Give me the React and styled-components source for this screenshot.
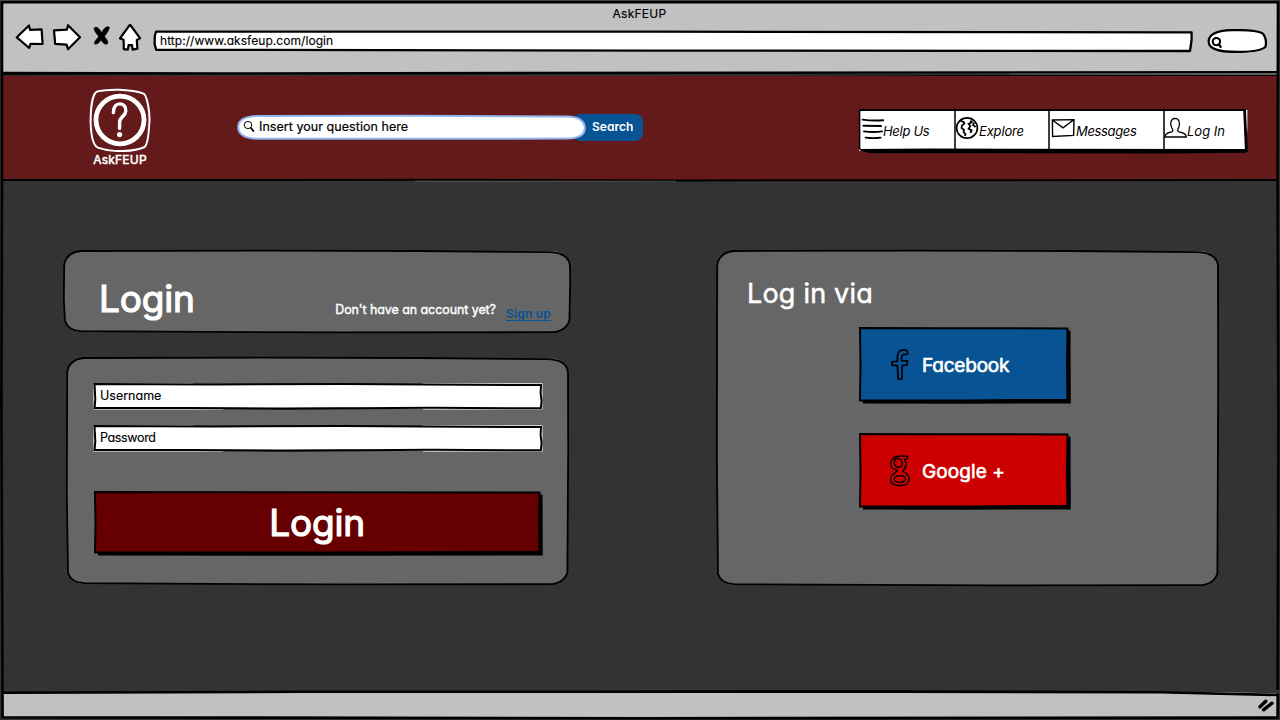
import React from "react";
import styled, { createGlobalStyle } from "styled-components";

const GlobalStyle = createGlobalStyle`
  * { box-sizing: border-box; }
  body {
    margin: 0;
    background: #333;
    overflow: hidden;
    font-family: Inter, "Open Sans", sans-serif;
    font-feature-settings: "cv11" 1;
  }
`;

/* ---------- window ---------- */

const Window = styled.div`
  position: relative;
  width: 1280px;
  height: 720px;
  display: flex;
  flex-direction: column;
  background: #333;
`;

const Chrome = styled.header`
  flex: none;
  height: 76px;
  margin: 0 2px;
  background: #c1c1c1;
  color: #000;
`;

const WindowTitle = styled.div`
  height: 24px;
  padding-top: 3px;
  padding-right: 1px;
  line-height: 21px;
  font-size: 12px;
  letter-spacing: 0.25px;
  text-align: center;
  -webkit-text-stroke: 0.15px #000;
`;

const Toolbar = styled.div`
  display: flex;
  height: 34px;
  padding-left: 12px;
`;

const ToolIcons = styled.svg`
  flex: none;
  width: 130px;
  height: 34px;
`;

const AddressBar = styled.div`
  position: relative;
  width: 1041px;
  height: 22px;
  margin: 6px 0 0 8px;
  padding-left: 8px;
  line-height: 22px;
  font-size: 12px;
  letter-spacing: 0.05px;
  -webkit-text-stroke: 0.15px #000;
`;

const ChromeSearch = styled.svg`
  flex: none;
  width: 62px;
  height: 28px;
  margin: 3px 0 0 13px;
`;

const Overlay = styled.svg`
  position: absolute;
  inset: 0;
  width: 100%;
  height: 100%;
  overflow: visible;
  pointer-events: none;
`;

const Label = styled.span`
  position: relative;
`;

const StatusBar = styled.footer`
  flex: none;
  display: flex;
  justify-content: flex-end;
  height: 26px;
  margin: 0 2px 2px;
  background: #c1c1c1;
`;

const Grip = styled.svg`
  width: 20px;
  height: 16px;
  margin-top: 7px;
`;

/* ---------- site header ---------- */

const SiteHeader = styled.div`
  flex: none;
  display: flex;
  height: 105px;
  margin: 0 2px;
  padding: 12px 31px 0 87px;
  background: #641a1a;
`;

const Brand = styled.div`
  width: 62px;
  color: #fff;
  text-align: center;
`;

const BrandMark = styled.svg`
  display: block;
  width: 62px;
  height: 64px;
`;

const BrandName = styled.div`
  height: 14px;
  line-height: 15px;
  font-size: 12px;
  letter-spacing: 0.2px;
  -webkit-text-stroke: 0.5px #fff;
`;

const Search = styled.form`
  display: flex;
  margin: 26px 0 0 86px;
`;

const SearchField = styled.div`
  position: relative;
  z-index: 1;
  display: flex;
  width: 349px;
  height: 26px;
  padding: 0 0 1px 5px;
  align-items: center;
  color: #000;
  font-size: 12.5px;
  letter-spacing: 0.05px;
  -webkit-text-stroke: 0.2px #000;
`;

const SearchGlyph = styled.svg`
  position: relative;
  width: 15px;
  height: 15px;
  margin-right: 2px;
`;

const SearchButton = styled.button`
  width: 70px;
  height: 27px;
  margin: 0 0 0 -13px;
  padding: 0 10px 2px 19px;
  border: 0;
  border-radius: 8px;
  background: #075394;
  color: #fff;
  font: 600 12px Inter, sans-serif;
  font-feature-settings: inherit;
  text-align: left;
`;

const Nav = styled.nav`
  position: relative;
  display: flex;
  width: 389px;
  height: 45px;
  margin: 21px 0 0 auto;
  padding: 1px 3px 3px 1px;
`;

const NavItem = styled.a`
  position: relative;
  display: flex;
  align-items: center;
  width: ${(p) => p.$width}px;
  padding-left: ${(p) => p.$pad}px;
  color: #000;
  font-size: 13px;
  font-style: italic;
  letter-spacing: ${(p) => p.$track}px;
  white-space: nowrap;
`;

const NavIcon = styled.svg`
  flex: none;
  width: 24px;
  height: 24px;
  margin: -5px ${(p) => p.$gap}px 0 0;
`;

/* ---------- content ---------- */

const Content = styled.main`
  flex: none;
  display: flex;
  gap: 145px;
  height: 511px;
  padding: 69px 0 0 63px;
  color: #fff;
`;

const LeftColumn = styled.div`
  width: 508px;
`;

const Panel = styled.section`
  position: relative;
  width: ${(p) => p.$w}px;
  height: ${(p) => p.$h}px;
`;

const HeadingPanel = styled(Panel)`
  display: flex;
  padding: 27px 20px 0 36px;
`;

const BigText = styled.span`
  position: relative;
  font-size: 37px;
  letter-spacing: -0.2px;
  line-height: 44px;
  -webkit-text-stroke: 1.2px #fff;
`;

const Prompt = styled.span`
  position: relative;
  margin: 23px 10px 0 auto;
  font-size: 12.5px;
  letter-spacing: -0.08px;
  line-height: 20px;
  -webkit-text-stroke: 0.4px #fff;
`;

const SignUp = styled.a`
  position: relative;
  height: 17px;
  margin-top: 27px;
  border-bottom: 1px solid #075394;
  color: #075394;
  font-size: 12px;
  font-weight: 600;
  letter-spacing: 0.2px;
  line-height: 19px;
`;

const FormPanel = styled(Panel)`
  display: flex;
  flex-direction: column;
  margin: 24px 0 0 3px;
  padding: 26px 0 0 27px;
`;

const Field = styled.div`
  position: relative;
  flex: none;
  width: 450px;
  height: 27px;
  margin-bottom: 15px;
  padding-left: 7px;
  color: #000;
  font-size: 12.5px;
  letter-spacing: ${(p) => p.$track || 0}px;
  line-height: 26px;
  -webkit-text-stroke: 0.15px #000;
`;

const BoxButton = styled.button`
  position: relative;
  display: flex;
  align-items: center;
  width: ${(p) => p.$w}px;
  height: ${(p) => p.$h}px;
  padding: 0;
  border: 0;
  background: none;
  color: #fff;
  font: 400 19px Inter, sans-serif;
  font-feature-settings: inherit;
`;

const SubmitButton = styled(BoxButton)`
  justify-content: center;
  margin: 24px 0 0 1px;
  padding: 0 3px 2px 0;
`;

const ViaPanel = styled(Panel)`
  padding: 28px 0 0 31px;
`;

const ViaTitle = styled.h2`
  position: relative;
  margin: 0 0 17px;
  font-size: 27px;
  font-weight: 400;
  letter-spacing: 0.2px;
  line-height: 32px;
  -webkit-text-stroke: 0.5px #fff;
`;

const ProviderButton = styled(BoxButton)`
  margin: 0 0 29px 112px;
  padding: 0 0 1px 28px;
`;

const ProviderIcon = styled.svg`
  position: relative;
  width: 26px;
  height: 34px;
  margin-right: ${(p) => p.$gap}px;
`;

const ProviderName = styled.span`
  position: relative;
  letter-spacing: ${(p) => p.$track}px;
  -webkit-text-stroke: 0.65px #fff;
`;

/* ---------- hand-drawn outlines ---------- */

function PanelOutline({ w, h }) {
  const d = `M1.2 16 C1.5 8 8 1.6 18 1 L${w * 0.4} .7 L${w * 0.7} 1 L${w - 22} 2.2
    C${w - 9} 2.6 ${w - 1.5} 7 ${w - 1} 16 L${w - 0.8} ${h * 0.4} L${w - 1.6} ${h - 13}
    C${w - 3} ${h - 6} ${w - 10} ${h - 1} ${w - 20} ${h - 0.8} L${w * 0.55} ${h - 0.6}
    L${w * 0.2} ${h - 1.3} L18 ${h - 1.8} C10 ${h - 2.2} 4 ${h - 6} 2 ${h - 12}
    L.8 ${h * 0.6} Z`;
  return (
    <Overlay viewBox={`0 0 ${w} ${h}`}>
      <rect x="1" y="1" width={w - 2} height={h - 2} rx="17" fill="#666" />
      <path d={d} fill="#666" stroke="#000" strokeWidth="1.8" />
    </Overlay>
  );
}

function FieldOutline() {
  return (
    <Overlay viewBox="0 0 450 27">
      <rect x=".5" y=".3" width="449" height="26.2" fill="#fff" />
      <path d="M100 0H330V1H100ZM130 26H330V27H130Z" fill="#666" />
      <path d="M1.5 1 L120 1.4 L250 .9 L330 1.6 L448 2 L447.6 10 L448.6 18 L447.8 25.3 L340 24.8 L190 25.7 L100 25 L1.6 25 L2.3 16 Z" fill="#fff" stroke="#000" strokeWidth="2" />
      <path d="M110 24.8L190 26L280 24.6Z" fill="#000" />
    </Overlay>
  );
}

function ButtonOutline({ w, h, fill }) {
  return (
    <Overlay viewBox={`0 0 ${w} ${h}`}>
      <path d={`M4 3.4 H${w - 0.5} L${w - 0.2} ${h - 0.6} L${w / 2} ${h - 0.2} L4 ${h - 0.6} Z`} fill="#000" />
      <path
        d={`M1 1 L${w * 0.4} 1.3 L${w - 3.5} 1.4 L${w - 4} ${h * 0.5} L${w - 3.6} ${h - 4.2} L${w * 0.5} ${h - 3.6} L1 ${h - 3.4} L1.5 ${h * 0.5} Z`}
        fill={fill} stroke="#000" strokeWidth="2"
      />
    </Overlay>
  );
}

function WindowOutline() {
  return (
    <Overlay viewBox="0 0 1280 720">
      <path d="M0 0H1280V1H0Z" fill="#444" />
      <path d="M1278.7 0V720" stroke="#333" strokeWidth="1.5" />
      <g fill="none" stroke="#000" strokeWidth="2.6" strokeLinejoin="round">
        <path d="M2 2.2 L1278 2.2 L1277.6 180 L1278.4 420 L1277.6 717.6 L640 718.2 L2.6 717.2 L1.4 400 L2 180 Z" />
        <path d="M2 72.9 L220 73.4 L1278 72.2" strokeWidth="2.4" />
        <path d="M2 74.9 L640 75 L1278 75.2" strokeWidth="1.6" />
        <path d="M2 180.1 L420 179.8 L680 180.4 L1278 180.1" strokeWidth="2" />
        <path d="M2 692.8 L300 691.8 L900 691.6 L1160 692.3 L1278 695" strokeWidth="2.6" />
      </g>
      <path d="M1170 691 V690 H1279 V693.4 Z" fill="#333" />
      <path d="M1010 73.9H1277" stroke="#666" strokeWidth=".6" />
      <path d="M415 181.2H676" stroke="#777" strokeWidth=".6" />
    </Overlay>
  );
}

function GlobeIcon() {
  return (
    <NavIcon viewBox="0 0 24 24" $gap={0} fill="none" stroke="#000">
      <ellipse cx="12" cy="12" rx="10.4" ry="10.2" strokeWidth="1.7" />
      <path d="M5.4 4.8 L8.6 6 L9.4 7.6 L6.8 9.6 L6.6 12 L9 13.8 L8.6 16 L10.4 18 L10 20 M15.4 4.6 L16.8 6 L13.6 8 L15.4 10 L13.6 12.6 L16.6 14.4 L15.4 17 M19 6.6 L18 9 L20.6 11" strokeWidth="1.8" />
    </NavIcon>
  );
}

export default function App() {
  return (
    <Window>
      <GlobalStyle />
      <Chrome>
        <WindowTitle>AskFEUP</WindowTitle>
        <Toolbar>
          <ToolIcons viewBox="14 24 130 34" fill="#fff" stroke="#000" strokeWidth="2.2" strokeLinejoin="round" strokeLinecap="round">
            <path d="M16.8 37.3 L29 25.5 L30 29.8 L41.6 29.3 L42.6 44 L30.4 43.8 L29.2 48 Z" />
            <path d="M54 30.3 L67 29.6 L68 25.2 L80 37.2 L68 49.2 L66.6 44.6 L55.2 43.8 Z" />
            <path d="M94 28.4 C96 25.6 98.6 27.4 101.6 32.4 C104 27.6 108 25 109.6 27.6 C108.6 31 106.6 33.6 104.6 36.4 C106.6 39.4 109 41.6 107.4 44 C104.6 45.2 102.6 42.4 101 40.2 C98.6 43.4 96 45.6 94.2 43.6 C94.2 41 97.4 38.4 98.6 36.4 C96.6 33.6 94 31.4 94 28.4 Z" fill="#000" strokeWidth=".4" />
            <path d="M130 24.6 L140 38.2 L136.8 40 L137.4 48.6 L132.6 49.6 L132 45 L128.6 45.2 L127.8 49.6 L123.8 49.2 L123.6 39.8 L120 38.4 Z" />
          </ToolIcons>
          <AddressBar>
            <Overlay viewBox="0 0 1041 22">
              <path d="M4 1.7 L500 1.7 L1039.6 2.4 L1039.6 10 L1038 21 L500 20.6 L4.2 19.8 L2.6 14 L2.8 6 Z" fill="#fff" stroke="#000" strokeWidth="2.3" strokeLinejoin="round" />
            </Overlay>
            <Label>http://www.aksfeup.com/login</Label>
          </AddressBar>
          <ChromeSearch viewBox="1206 27 62 28" fill="#fff" stroke="#000" strokeLinecap="round">
            <path d="M1208.6 41.8 C1208.6 34 1216 30.6 1232 30.2 C1248 29.6 1258 30.6 1262.6 33.4 C1265.6 36 1266.6 42 1265.6 46.6 C1263 49.6 1254 51.6 1240 51.8 C1225 52 1208.8 51 1208.6 41.8 Z" strokeWidth="2.2" />
            <ellipse cx="1216.4" cy="41.6" rx="3.7" ry="3.6" strokeWidth="2.1" />
            <path d="M1218.8 44.4 L1220.6 46.8" strokeWidth="2.4" />
          </ChromeSearch>
        </Toolbar>
      </Chrome>

      <SiteHeader>
        <Brand>
          <BrandMark viewBox="89 88 62 64" fill="none" stroke="#fff">
            <path d="M97.5 91.4 C108 89 130 88.6 143.6 93.6 C147 95.4 150 112 149.4 122 C148.8 134 147.4 144.6 144.6 147 C134 152 112 152.6 98 147.6 C93 145.6 91 136 90.6 122 C90.6 108 92.4 93 97.5 91.4 Z" strokeWidth="2" />
            <ellipse cx="120" cy="120" rx="24" ry="23.8" strokeWidth="4.8" />
            <path d="M113.4 112.6 C113 100.4 126.8 102 125.8 111 C125.4 117 119.4 116.4 119.6 122.4 V128.4" strokeWidth="3.4" strokeLinecap="round" />
            <circle cx="119.6" cy="134.6" r="2.6" fill="#fff" stroke="none" />
          </BrandMark>
          <BrandName>AskFEUP</BrandName>
        </Brand>

        <Search>
          <SearchField>
            <Overlay viewBox="0 0 349 26">
              <path d="M1.2 13 C1.2 5 9 2.2 22 2 L170 1.8 L330 2.4 C342 2.8 347.8 7 347.8 14 C347.8 21 341 24.4 330 24.6 L22 24.8 C8 24.6 1.2 20 1.2 13 Z" fill="#fff" stroke="#94b6ee" strokeWidth="2" />
            </Overlay>
            <SearchGlyph viewBox="0 0 15 15" fill="none" stroke="#000">
              <ellipse cx="6" cy="6" rx="3.8" ry="3.6" strokeWidth="1" />
              <path d="M9 9 L11.4 12" strokeWidth="1.8" strokeLinecap="round" />
            </SearchGlyph>
            <Label>Insert your question here</Label>
          </SearchField>
          <SearchButton type="button">Search</SearchButton>
        </Search>

        <Nav>
          <Overlay viewBox="858 109 389 45">
            <path d="M859 110 H1247.4 V128 L1246 151 H859 Z" fill="#fff" />
            <path d="M859 149 L929 148.6 L1246 149 V152.8 L1164 153.4 L870 153.2 L860 150.6 Z" />
            <path d="M859.6 110 L1246 110" stroke="#000" strokeWidth="1.8" />
            <path d="M1244.6 109.6 L1246.4 152" stroke="#000" strokeWidth="2.8" />
            <path d="M859.6 110V149M955 110V150M1049 110V150M1164 109V152" stroke="#000" strokeWidth="1.5" />
          </Overlay>
          <NavItem $width={96} $pad={2} $track={-0.3}>
            <NavIcon viewBox="0 0 24 24" $gap={-2} fill="none" stroke="#000" strokeWidth="1.9" strokeLinecap="round">
              <path d="M1.6 3.6 Q11 5 22.2 4.2 M2.4 9.8 L20 10 M3 15.4 Q12 16.6 21 15.4 M4.6 21.6 Q13 22.6 19.6 21.6" />
            </NavIcon>
            <Label>Help Us</Label>
          </NavItem>
          <NavItem $width={94} $pad={0} $track={-0.15}>
            <GlobeIcon />
            <Label>Explore</Label>
          </NavItem>
          <NavItem $width={115} $pad={2} $track={-0.35}>
            <NavIcon viewBox="0 0 24 24" $gap={1} fill="none" stroke="#000" strokeWidth="1.4">
              <path d="M1.4 4 L23 3.6 L22.6 19.4 L1.6 20.4 Z M1.6 4.2 L12 11.8 L22.8 3.8" />
            </NavIcon>
            <Label>Messages</Label>
          </NavItem>
          <NavItem $width={80} $pad={0} $track={0}>
            <NavIcon viewBox="0 0 24 24" $gap={-1} fill="none" stroke="#000" strokeWidth="1.3" strokeLinejoin="round">
              <path d="M.8 21 C1.2 17.4 4 17 7.8 15.8 C9.6 14.8 9 13.4 7.6 11.6 C5.4 7.4 7 2.8 10.8 2.4 C15 2.4 16.4 6.6 14.8 11 C13.6 13.6 13 14.8 14.8 15.8 C19 17 22 17.4 22.4 21 Z" />
            </NavIcon>
            <Label>Log In</Label>
          </NavItem>
        </Nav>
      </SiteHeader>

      <Content>
        <LeftColumn>
          <HeadingPanel $w={508} $h={83}>
            <PanelOutline w={508} h={83} />
            <BigText>Login</BigText>
            <Prompt>Don't have an account yet?</Prompt>
            <SignUp>Sign up</SignUp>
          </HeadingPanel>
          <FormPanel $w={503} $h={228}>
            <PanelOutline w={503} h={228} />
            <Field><FieldOutline /><Label>Username</Label></Field>
            <Field $track={-0.35}><FieldOutline /><Label>Password</Label></Field>
            <SubmitButton type="button" $w={449} $h={65}>
              <ButtonOutline w={449} h={65} fill="#600" />
              <BigText>Login</BigText>
            </SubmitButton>
          </FormPanel>
        </LeftColumn>

        <ViaPanel $w={503} $h={336}>
          <PanelOutline w={503} h={336} />
          <ViaTitle>Log in via</ViaTitle>
          <ProviderButton type="button" $w={212} $h={77}>
            <ButtonOutline w={212} h={77} fill="#075394" />
            <ProviderIcon viewBox="0 0 26 34" $gap={9} fill="none" stroke="#000" strokeWidth="1.7" strokeLinejoin="round">
              <path d="M10.4 13.4 C10 5.6 11.4 2 16 1.8 C19.4 1.4 20.8 2.4 20.6 6.2 L17.4 6.6 C14.6 6.2 14.4 8.4 14.6 13 L20.4 12.8 L20.2 17 L15.2 17.4 L14.8 31 L11.2 31 L10.4 17.6 L5 17.2 L5.2 13.6 Z" />
            </ProviderIcon>
            <ProviderName $track={-0.2}>Facebook</ProviderName>
          </ProviderButton>
          <ProviderButton type="button" $w={212} $h={77}>
            <ButtonOutline w={212} h={77} fill="#c00" />
            <ProviderIcon viewBox="0 0 26 34" $gap={9} fill="none" stroke="#000" strokeWidth="1.4" strokeLinejoin="round">
              <path d="M20.8 2.4 C16 1.8 9.6 1.2 6 4.4 C2 8.2 3.4 14.6 8.4 15.4 L10.6 16.4 C7.6 18 9.4 18.8 7 19.8 C1.8 22 2.6 30 8.4 31 C14.4 32.4 21.8 31.2 22.2 25.4 C22.4 20.8 19.4 19.4 16.4 17.6 C14.6 16.4 18.8 15.6 19 10.6 C19.2 7.6 17.6 6.4 17.6 5.4 L20.4 4.6 Z" />
              <path d="M8 5.6 C11 3.2 15 5.4 15.4 9.4 C15.6 13.4 10 14.6 8.2 11.4 C7 9.4 6.8 7 8 5.6 Z M7 24.6 C9 20.6 17.6 20.6 18.6 25 C18.8 29.4 6.8 29.6 7 24.6 Z" />
            </ProviderIcon>
            <ProviderName $track={0.1}>Google +</ProviderName>
          </ProviderButton>
        </ViaPanel>
      </Content>

      <StatusBar>
        <Grip viewBox="1258 701 20 16" stroke="#000" strokeWidth="3.4" strokeLinecap="round">
          <path d="M1260 708.8 L1265.8 703.2 M1263.6 711.8 L1272 705.2" />
        </Grip>
      </StatusBar>
      <WindowOutline />
    </Window>
  );
}
